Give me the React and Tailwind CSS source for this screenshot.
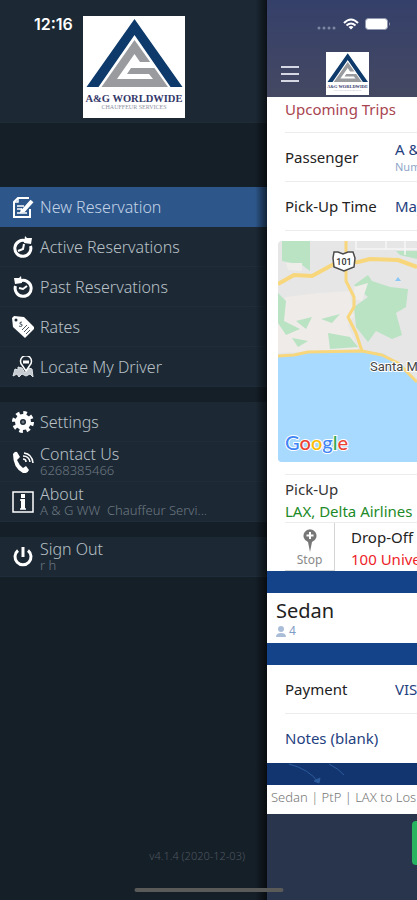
import React from 'react';

function Logo({ className }) {
    return (
        <svg viewBox="0 0 102 102" className={className} role="img" aria-label="A&G Worldwide">
            <rect width="102" height="102" fill="#fff" />
            <path d="M51.500 3 L99.500 71 H87.500 L51.500 19 L15.500 71 H3.500 Z" fill="#0d3a6b" />
            <path d="M51.500 24 L85 71 H18.500 Z" fill="#999b9f" />
            <path d="M51.500 38 L57 46 H69 L73 52 H48 L44 58 H66 L70 63 H34 Z" fill="#fff" />
            <text x="51" y="86" textAnchor="middle" fontFamily="Liberation Serif, serif" fontSize="10.500" fontWeight="bold" fill="#34386a">A&amp;G WORLDWIDE</text>
            <text x="51" y="93" textAnchor="middle" fontFamily="Liberation Serif, serif" fontSize="6" fill="#8f93a3">CHAUFFEUR SERVICES</text>
        </svg>
    );
}

const icons = {
    edit: (
        <g fill="none" stroke="#fff" strokeWidth="2">
            <path d="M18 13 V21 H2 V6 L6 2 H17" />
            <path d="M2 6 H6 V2 M5 10 H12 M5 13 H10 M5 17 H15" strokeWidth="1.500" />
            <path d="M20 5 L11 15" strokeWidth="4" />
            <path d="M9 12 L8 17 L13 16 Z" fill="#fff" stroke="none" />
        </g>
    ),
    active: (
        <g fill="none" stroke="#fff">
            <path d="M14 5 A8 8 0 1 0 18.500 10" strokeWidth="3" />
            <path d="M13 0 L15 2 H20 L19 8 L12 7 Z" fill="#fff" stroke="none" />
            <path d="M12 8 L11 13 L6 15" strokeWidth="2" />
        </g>
    ),
    past: (
        <g fill="none" stroke="#fff">
            <path d="M8 5 A8 8 0 1 1 3.500 10" strokeWidth="3" />
            <path d="M9 0 L7 2 H2 L3 8 L10 7 Z" fill="#fff" stroke="none" />
            <path d="M15 10 L11 13 L7 12" strokeWidth="2" />
        </g>
    ),
    rates: (
        <g>
            <path d="M0 2 L2 0 L12 1 L23 12 L13 22 L1 11 Z" fill="#fff" />
            <circle cx="4" cy="4" r="1.500" fill="#1c2935" />
            <path d="M10 6 Q7 6 8 8 Q11 8 10 10 Q8 11 7 10 M10 14 L15 9 M12 16 L17 11 M14 18 L18 14" fill="none" stroke="#4b5661" />
        </g>
    ),
    locate: (
        <g fill="none" stroke="#fff">
            <path d="M1 20 L3 13 L6 14 V11 L10 12 L13 17 L17 12 L20 13 L21 21 L18 18 L14 20 L10 18 L7 21 L5 18 Z" fill="#c5cbd0" stroke="#dfe3e6" />
            <path d="M14 15 L10 9 A5.500 5.500 0 1 1 18 9 Z" fill="#1c2935" strokeWidth="1.500" />
            <path d="M11 6 H17" strokeWidth="3" />
        </g>
    ),
    settings: (
        <g fill="none" stroke="#fff">
            <circle cx="11" cy="11" r="5.500" strokeWidth="5" />
            <circle cx="11" cy="11" r="9" strokeWidth="4" strokeDasharray="3.534 3.534" />
            <circle cx="11" cy="11" r="1" strokeWidth="1" stroke="#8a939b" />
        </g>
    ),
    phone: (
        <g fill="none" stroke="#fff">
            <path d="M1 3 Q3 0 5 1 L8 6 L5 9 Q7 14 11 17 L14 15 L17 19 Q15 23 11 22 Q1 17 1 3 Z" fill="#fff" stroke="none" />
            <path d="M11 8 Q14 8 14 11 M11 5 Q17 5 18 11 M12 2 Q20 3 21 12" strokeWidth="1.500" />
        </g>
    ),
    about: (
        <g fill="none" stroke="#fff">
            <rect x="1" y="1" width="20" height="20" strokeWidth="1.500" />
            <path d="M11 3 V7 M11 8 V18" strokeWidth="4" />
            <path d="M8 9 H12 M8 18 H14" strokeWidth="1.500" />
        </g>
    ),
    power: (
        <g fill="none" stroke="#fff" strokeWidth="3">
            <path d="M6 4.500 A8 8 0 1 0 16 4.500" />
            <path d="M11 1 V11" />
        </g>
    ),
};

const groups = [
    [
        { icon: 'edit', label: 'New Reservation', active: true },
        { icon: 'active', label: 'Active Reservations' },
        { icon: 'past', label: 'Past Reservations' },
        { icon: 'rates', label: 'Rates' },
        { icon: 'locate', label: 'Locate My Driver' },
    ],
    [
        { icon: 'settings', label: 'Settings' },
        { icon: 'phone', label: 'Contact Us', sub: '6268385466' },
        { icon: 'about', label: 'About', sub: 'A & G WW\u00a0 Chauffeur Servi...' },
    ],
    [{ icon: 'power', label: 'Sign Out', sub: 'r h' }],
];

function MenuItem({ icon, label, sub, active }) {
    return (
        <button
            type="button"
            className={`flex h-10 w-full items-center gap-[6px] pl-3 text-left ${active ? 'bg-[#2d578b]' : 'border-b border-[#1f2d3a]'}`}
        >
            <svg viewBox="0 0 22 22" className="size-[22px] shrink-0" aria-hidden="true">{icons[icon]}</svg>
            <span className="flex min-w-0 flex-col">
                <span className={`text-base font-light ${sub ? 'leading-4' : 'leading-5'} ${active ? 'text-[#c3d3e6]' : 'text-[#b9c0c6]'}`}>{label}</span>
                {sub && <span className="text-[13px] leading-4 font-light text-[#6d7780]">{sub}</span>}
            </span>
        </button>
    );
}

function SideMenu() {
    return (
        <nav className="relative flex w-[267px] shrink-0 flex-col bg-[#151f28]">
            <div className="flex h-[123px] items-start border-b border-[#1f2b36] bg-[#1c2935] pt-4 pl-[34px]">
                <span className="w-[49px] font-['Inter'] text-base leading-4 font-semibold text-white">12:16</span>
                <Logo className="size-[102px] shrink-0" />
            </div>
            <div className="mt-16 flex flex-col gap-[15px]">
                {groups.map((items, i) => (
                    <div key={i} className="bg-[#1c2935]">
                        {items.map((item) => <MenuItem key={item.label} {...item} />)}
                    </div>
                ))}
            </div>
            <p className="mt-auto pr-[22px] pb-9 text-right text-[11px] leading-4 font-light text-[#4d565e]">v4.1.4 (2020-12-03)</p>
            <div className="pointer-events-none absolute inset-y-0 right-0 w-3 bg-linear-to-r from-transparent to-black/60" />
        </nav>
    );
}

function TripMap() {
    return (
        <svg viewBox="0 0 139 221" preserveAspectRatio="xMinYMin slice" className="ml-[11px] h-[221px] w-[139px] min-w-[calc(100%-11px)] rounded-l" role="img" aria-label="Map">
            <rect width="139" height="221" fill="#e6e6e6" />
            <path d="M8 56 L40 52 L72 50 L76 75 L70 84 L80 108 L0 112 V65 Z" fill="#eeebe8" />
            <path d="M4 0 H32 V30 L24 24 L4 20 Z M118 10 H139 V18 L122 14 Z" fill="#b9e3c2" />
            <path d="M76 44 L90 34 L94 40 L112 46 L130 48 L128 66 L118 72 L124 94 L114 98 L98 90 L90 101 L78 86 L76 66 L90 56 Z" fill="#b9e3c2" />
            <path d="M0 52 L8 60 L6 80 L22 88 L8 94 L0 82 Z M18 80 L34 76 L28 88 Z M43 78 L62 73 L54 82 Z M50 92 L72 96 L80 106 L52 108 Z M14 97 L30 100 L20 106 Z" fill="#b9e3c2" />
            <path d="M76 46 L90 42 L84 60 L77 58 Z M8 22 L24 22 V30 L10 29 Z" fill="#efede9" />
            <path d="M78 0 V8 H139 M108 0 V8 M127 0 V14" fill="none" stroke="#f6f6f6" strokeWidth="1.500" />
            <path d="M0 115 L28 112 L84 109 L106 113 L120 122 L139 141 V221 H0 Z" fill="#a8d9ff" />
            <g fill="none" stroke="#f8d77c" strokeWidth="4" strokeLinejoin="round">
                <path d="M0 43 L16 34 L34 35 L56 23 L80 21 L92 18 L120 19 L139 26" />
                <path d="M68 0 V40 L76 56 L76 66 L70 76 L78 92 L84 110" strokeWidth="3" />
                <path d="M0 115 L16 114 L30 111 L84 110 L104 114 L120 122 L139 141" strokeWidth="3" />
            </g>
            <path d="M117 40 L120 36 L123 40 Z" fill="#8bc7f5" />
            <path d="M56 11 L60 11 L65 13 L70 11 L75 11 L77 17 L76 26 L66 30 L56 26 L55 17 Z" fill="#fff" stroke="#4c4c4c" strokeWidth="1.500" />
            <text x="66" y="24" textAnchor="middle" fontFamily="Roboto, sans-serif" fontSize="9" fontWeight="500" fill="#333">101</text>
            <text x="92" y="130" fontFamily="Roboto, sans-serif" fontSize="13" fill="#444" stroke="#fff" strokeWidth="2" paintOrder="stroke">Santa Monica</text>
            <text x="7" y="209" fontFamily="Lato, sans-serif" fontSize="20" fontWeight="500" stroke="#fff" strokeWidth="2" paintOrder="stroke">
                <tspan fill="#4285f4">G</tspan><tspan fill="#ea4335">o</tspan><tspan fill="#fbbc05">o</tspan><tspan fill="#4285f4">g</tspan><tspan fill="#34a853">l</tspan><tspan fill="#ea4335">e</tspan>
            </text>
        </svg>
    );
}

function StatusIcons() {
    return (
        <div className="flex h-4 items-center gap-[6px] pl-[50px]">
            <svg viewBox="0 0 20 16" className="h-4 w-5" fill="#7d86a3">
                <circle cx="2" cy="12" r="1.500" /><circle cx="7" cy="12" r="1.500" /><circle cx="12" cy="12" r="1.500" /><circle cx="17" cy="12" r="1.500" />
            </svg>
            <svg viewBox="0 0 16 12" className="h-3 w-4" fill="none" stroke="#fff" strokeWidth="2">
                <path d="M1 5 Q8 -2 15 5 M3.500 7.500 Q8 3.500 12.500 7.500" /><path d="M5.500 9 Q8 7 10.500 9 L8 11.500 Z" fill="#fff" stroke="none" />
            </svg>
            <svg viewBox="0 0 26 12" className="h-3 w-[26px]">
                <rect x=".5" y=".5" width="22" height="11" rx="3" fill="#fff" stroke="#9299b0" /><path d="M24 4 V8 Q26 6 24 4" fill="#9299b0" />
            </svg>
        </div>
    );
}

function Row({ label, value, sub }) {
    return (
        <div className="ml-[18px] flex h-[49px] items-center border-b border-[#ececec]">
            <span className="w-[110px] shrink-0 text-[#222]">{label}</span>
            <span className="flex flex-col text-[#1f4180]">
                <span className="leading-5">{value}</span>
                {sub && <span className="text-[11px] leading-4 text-[#8fa5c9]">{sub}</span>}
            </span>
        </div>
    );
}

function TripScreen() {
    return (
        <main className="flex min-w-0 flex-1 flex-col overflow-hidden bg-[#14438a] text-[15px] whitespace-nowrap">
            <header className="h-[97px] bg-linear-to-b from-[#35406a] to-[#444862] pt-4">
                <StatusIcons />
                <div className="flex items-start pt-5 pl-[14px]">
                    <button type="button" aria-label="Menu" className="mt-[14px] flex w-[18px] flex-col gap-[5px]">
                        <span className="h-[2px] bg-[#d5d8e2]" />
                        <span className="h-[2px] bg-[#d5d8e2]" />
                        <span className="h-[2px] bg-[#d5d8e2]" />
                    </button>
                    <Logo className="ml-[27px] size-[43px] shrink-0" />
                </div>
            </header>
            <section className="h-[474px] bg-white">
                <h1 className="ml-[18px] h-9 border-b border-[#ececec] leading-6 text-[#a8454f]">Upcoming Trips</h1>
                <Row label="Passenger" value="A & G" sub="Number" />
                <Row label="Pick-Up Time" value="May 15" />
                <div className="pt-[10px] pb-3"><TripMap /></div>
                <div className="ml-[18px] border-y border-[#ececec] pt-[3px]">
                    <p className="leading-[22px] text-[#333]">Pick-Up</p>
                    <p className="leading-[22px] text-[#1c8a28]">LAX, Delta Airlines</p>
                </div>
                <div className="ml-[18px] flex">
                    <button type="button" className="flex h-12 w-[50px] shrink-0 flex-col items-center border-r border-b border-[#d5d5d5] pt-[6px] text-xs leading-4 text-[#888]">
                        <svg viewBox="0 0 14 23" className="h-[23px] w-[14px] shrink-0">
                            <path d="M7 23 L5 13 A6.500 6.500 0 1 1 9 13 Z" fill="#777" />
                            <path d="M7 3 V10 M3.500 6.500 H10.500" stroke="#fff" strokeWidth="2" />
                        </svg>
                        Stop
                    </button>
                    <div className="ml-4 pt-[3px]">
                        <p className="leading-[22px] text-[#222]">Drop-Off</p>
                        <p className="leading-[22px] text-[#ee2329]">100 Universal</p>
                    </div>
                </div>
            </section>
            <section className="mt-[22px] h-[50px] bg-white pt-[6px] pl-[9px]">
                <h2 className="text-xl leading-6 text-[#222]">Sedan</h2>
                <p className="flex items-center gap-[3px] text-xs leading-4 text-[#7f9cc4]">
                    <svg viewBox="0 0 10 11" className="h-[11px] w-[10px]" fill="#a9bdd8"><circle cx="5" cy="3" r="3" /><path d="M0 11 Q0 7 5 7 Q10 7 10 11 Z" /></svg>
                    4
                </p>
            </section>
            <section className="mt-[22px] h-[98px] bg-white">
                <Row label="Payment" value="VISA" />
                <p className="ml-[18px] leading-[49px] text-[#1f4180]">Notes (blank)</p>
            </section>
            <div className="h-[22px] bg-[#12356f]">
                <svg viewBox="0 0 150 22" className="h-[22px] w-[150px]" fill="none" stroke="#2c5c9c">
                    <path d="M22 1 Q42 6 52 20 M62 1 Q72 6 77 12" />
                    <path d="M52 20 L47 18 L53 15 Z" fill="#2c5c9c" />
                </svg>
            </div>
            <p className="h-[29px] bg-white pl-1 text-[13px] leading-[25px] font-light text-[#777]">Sedan | PtP | LAX to Los Angeles</p>
            <footer className="flex flex-1 bg-[#29344d] pt-[7px] pl-[145px]">
                <button type="button" aria-label="Book" className="h-11 w-32 shrink-0 rounded-sm bg-[#27b35f]" />
            </footer>
        </main>
    );
}

export default function App() {
    return (
        <div className="relative flex min-h-screen overflow-hidden font-['Noto_Sans','Open_Sans',sans-serif]">
            <SideMenu />
            <TripScreen />
            <div className="absolute bottom-2 left-1/2 h-1 w-[149px] -translate-x-1/2 rounded-full bg-[#5a5a58]" />
        </div>
    );
}
